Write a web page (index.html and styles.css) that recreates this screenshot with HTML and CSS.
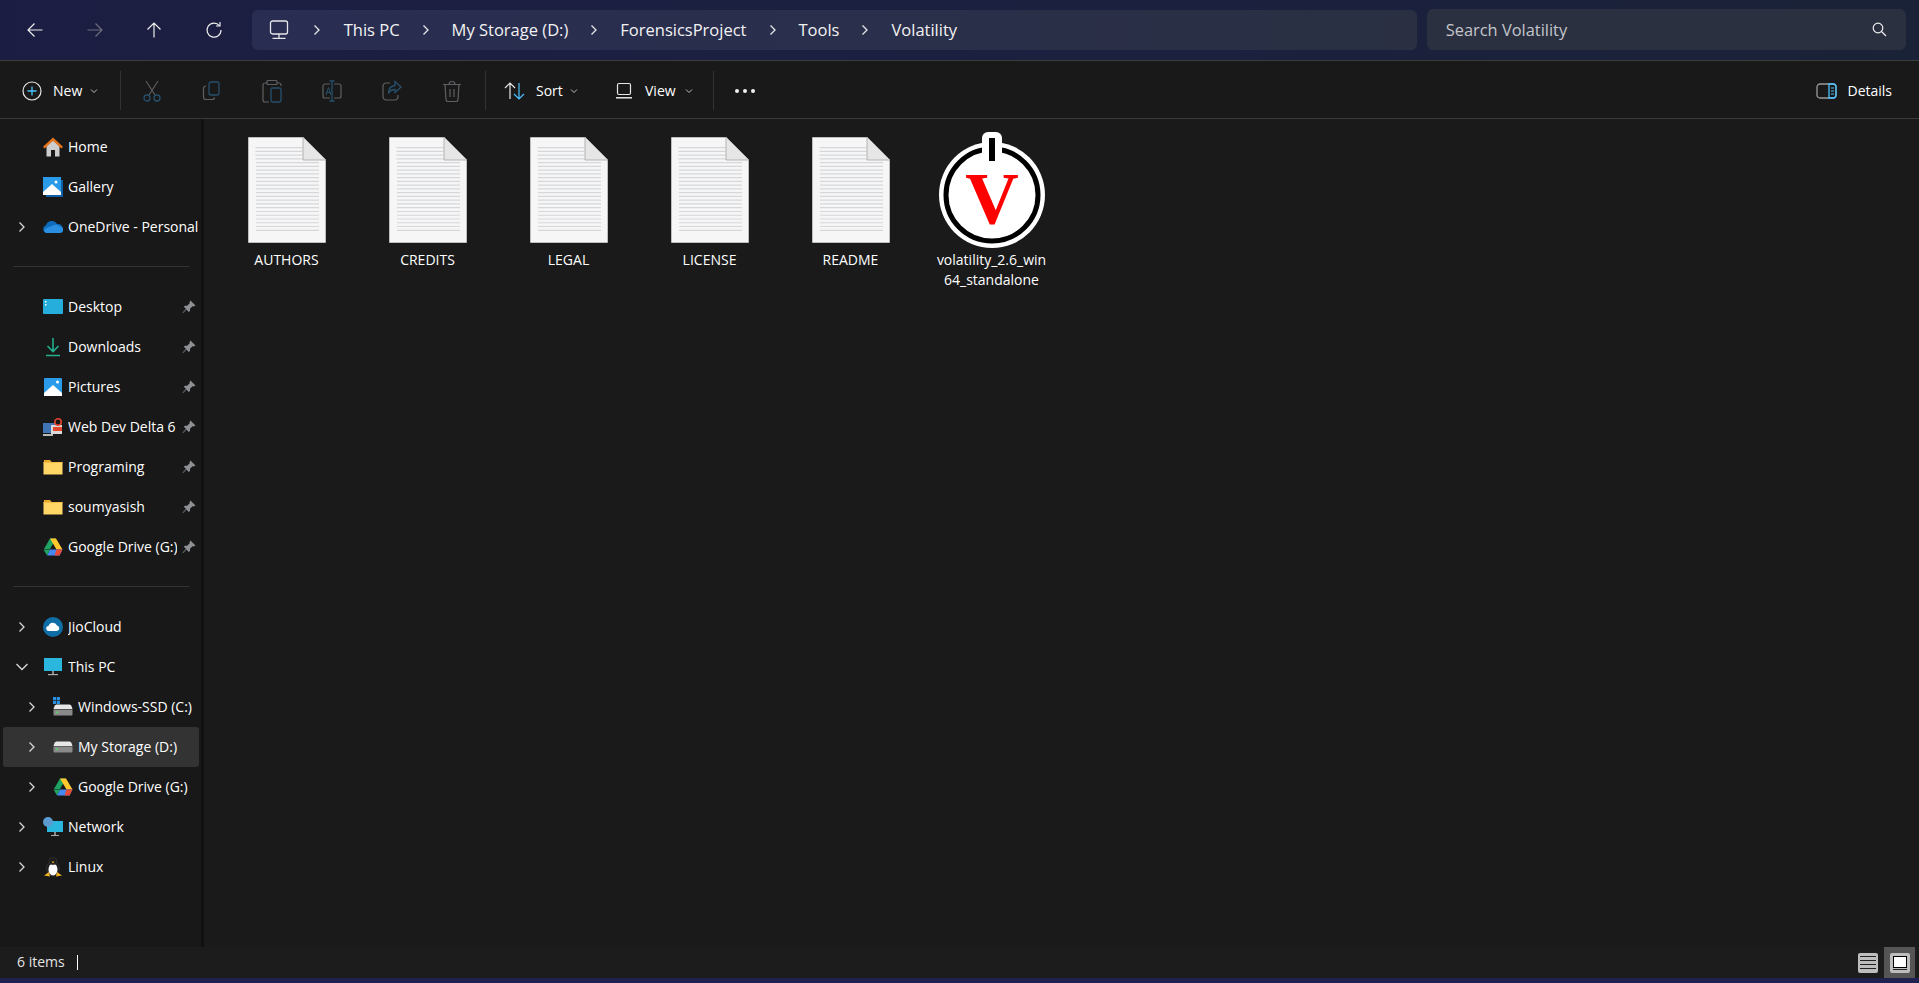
FILE: index.html
```html
<!DOCTYPE html>
<html lang="en">
<head>
    <meta charset="UTF-8">
    <title>Volatility - File Explorer</title>
    <link rel="stylesheet" href="styles.css">
</head>
<body>
    <!-- shared icons -->
    <svg class="sprite" xmlns="http://www.w3.org/2000/svg">
        <symbol id="chev-right" viewBox="0 0 12 12"><path d="M3.5 1.5 8 6l-4.500 4.500" fill="none" stroke="currentColor" stroke-width="1.300"/></symbol>
        <symbol id="caret" viewBox="0 0 8 8"><path d="M1 2.500 4 5.500 7 2.500" fill="none" stroke="currentColor" stroke-width="1"/></symbol>
        <symbol id="pin" viewBox="0 0 14 14"><path d="M8.500 0.500 13.500 5.500 12 6.500 10.500 6.300 8 8.800 8 11 6.800 12 4.500 9.500 1 13 0.500 12.500 4 9 1.800 6.800 3 5.800 5.200 5.800 7.700 3.300 7.500 2Z" fill="#8d9094"/></symbol>
        <symbol id="folder" viewBox="0 0 20 16"><path d="M1 1h6l2 2.500H1Z" fill="#e8a92c"/><path d="M.5 3h19v12.500H.5Z" fill="#ffd766"/><path d="M.5 3h19v1H.5Z" fill="#f3bd47"/></symbol>
        <symbol id="gdrive" viewBox="0 0 20 18"><path d="M7 .5h6l-6 10.500H1Z" fill="#1ea362"/><path d="M7 .5h6l6.500 11h-6Z" fill="#ffc92e"/><path d="M4 17.500 7 11.500h12.500l-3 6Z" fill="#4688f4"/><path d="M.500 11.500h6.500l-3 6Z" fill="#1ea362"/><path d="M16.500 17.500h-5l2-6h6Z" fill="#e84a35"/></symbol>
        <symbol id="drive" viewBox="0 0 20 12"><path d="M4 .5h12c1 0 2 .5 2.500 1.500l1 3H.500l1-3C2 1 3 .5 4 .5Z" fill="#e6e6e6"/><path d="M.5 5.500h19v5c0 .5-.5 1-1 1h-17c-.5 0-1-.5-1-1Z" fill="#8a8a8a"/><rect x="3" y="7.500" width="2" height="1.500" fill="#47e05f"/></symbol>
        <symbol id="doc" viewBox="0 0 78 106"><path d="M0 0h55l23 23v83H0Z" fill="#f6f6f7" stroke="#6b6b6b" stroke-width=".8"/><line x1="31" y1="10" x2="31" y2="24" stroke="#d6d7d9" stroke-width="47" stroke-dasharray="1.200 2.560"/><line x1="39.500" y1="25" x2="39.500" y2="96" stroke="#d6d7d9" stroke-width="63" stroke-dasharray="1.200 2.560"/><path d="M55 0 78 23H55Z" fill="#e6e6e6" stroke="#a5a5a5" stroke-width=".8"/></symbol>
    </svg>

    <div class="app">
        <!-- Barra de titulo -->
        <header class="titlebar">
            <nav class="nav-btns">
                <span class="nav-btn"><svg width="18" height="18" viewBox="0 0 18 18"><path d="M16.500 9H2M8.500 2.500 2 9l6.500 6.500" fill="none" stroke="#eee" stroke-width="1.200"/></svg></span>
                <span class="nav-btn"><svg width="18" height="18" viewBox="0 0 18 18"><path d="M1.500 9H16M9.500 2.500 16 9l-6.500 6.500" fill="none" stroke="#6d6f7d" stroke-width="1.200"/></svg></span>
                <span class="nav-btn"><svg width="18" height="18" viewBox="0 0 18 18"><path d="M9 16.500V2M2.500 8.500 9 2l6.500 6.500" fill="none" stroke="#eee" stroke-width="1.200"/></svg></span>
                <span class="nav-btn"><svg width="18" height="18" viewBox="0 0 18 18"><path d="M14.500 4.800A7 7 0 1 0 16 9" fill="none" stroke="#eee" stroke-width="1.200"/><path d="M15 1v4h-4" fill="none" stroke="#eee" stroke-width="1.200"/></svg></span>
            </nav>
            <div class="address">
                <svg class="pc-icon" width="20" height="20" viewBox="0 0 20 20"><rect x="1.500" y="1" width="17" height="13" rx="2" fill="none" stroke="#e6e6ea" stroke-width="1.300"/><path d="M10 14v4M3.500 18.300h13" fill="none" stroke="#e6e6ea" stroke-width="1.300"/></svg>
                <svg class="crumb-chev" width="12" height="12"><use href="#chev-right"/></svg>
                <span>This PC</span>
                <svg class="crumb-chev" width="12" height="12"><use href="#chev-right"/></svg>
                <span>My Storage (D:)</span>
                <svg class="crumb-chev" width="12" height="12"><use href="#chev-right"/></svg>
                <span>ForensicsProject</span>
                <svg class="crumb-chev" width="12" height="12"><use href="#chev-right"/></svg>
                <span>Tools</span>
                <svg class="crumb-chev" width="12" height="12"><use href="#chev-right"/></svg>
                <span>Volatility</span>
            </div>
            <div class="search">
                <span>Search Volatility</span>
                <svg width="15" height="15" viewBox="0 0 15 15"><circle cx="6" cy="6" r="4.800" fill="none" stroke="#eee" stroke-width="1.200"/><path d="M9.500 9.500 14 14" stroke="#eee" stroke-width="1.200"/></svg>
            </div>
        </header>

        <!-- Barra de comandos -->
        <div class="toolbar">
            <div class="tool tool-new">
                <svg width="20" height="20" viewBox="0 0 20 20"><circle cx="10" cy="10" r="9" fill="none" stroke="#e8e8e8" stroke-width="1.200"/><path d="M10 5.500v9M5.500 10h9" stroke="#4cc2ff" stroke-width="1.300"/></svg>
                <span>New</span>
                <svg class="caret" width="8" height="8"><use href="#caret"/></svg>
            </div>
            <span class="divider"></span>
            <div class="tool-icons">
                <span class="icon-btn"><svg width="20" height="22" viewBox="0 0 20 22"><path d="M4 1l9 14M16 1 7 15" stroke="#5e6063" fill="none" stroke-width="1.100"/><circle cx="5" cy="18" r="3" fill="none" stroke="#27506c" stroke-width="1.300"/><circle cx="15" cy="18" r="3" fill="none" stroke="#27506c" stroke-width="1.300"/></svg></span>
                <span class="icon-btn"><svg width="20" height="20" viewBox="0 0 20 20"><rect x="7" y="1" width="10" height="13" rx="2" fill="none" stroke="#27506c" stroke-width="1.300"/><path d="M4 5C2.500 5 1.500 6 1.500 7.500V16c0 1.500 1 2.500 2.500 2.500h6c1.500 0 2.500-1 2.500-2" fill="none" stroke="#5e6063" stroke-width="1.200"/></svg></span>
                <span class="icon-btn"><svg width="20" height="24" viewBox="0 0 20 24"><path d="M5 4H3C2 4 1 5 1 6v15c0 1 1 2 2 2h4M15 4h2c1 0 2 1 2 2v1" fill="none" stroke="#5e6063" stroke-width="1.200"/><rect x="5" y="1.500" width="10" height="4" rx="1" fill="none" stroke="#5e6063" stroke-width="1.200"/><rect x="9" y="9" width="10" height="14" rx="1.500" fill="none" stroke="#27506c" stroke-width="1.300"/></svg></span>
                <span class="icon-btn"><svg width="20" height="22" viewBox="0 0 20 22"><path d="M8 4H3C2 4 1 5 1 6v10c0 1 1 2 2 2h5M12 4h5c1 0 2 1 2 2v10c0 1-1 2-2 2h-5" fill="none" stroke="#5e6063" stroke-width="1.200"/><path d="M10 1v20M7.500 1h5M7.500 21h5" stroke="#27506c" stroke-width="1.300" fill="none"/><path d="M4 15 6.500 7.500 9 15M5 12.500h3" stroke="#27506c" fill="none"/></svg></span>
                <span class="icon-btn"><svg width="20" height="22" viewBox="0 0 20 22"><path d="M8 3H4C2.500 3 1 4.500 1 6v11c0 1.500 1.500 3 3 3h9c1.500 0 3-1.500 3-3v-2" fill="none" stroke="#5e6063" stroke-width="1.200"/><path d="M13 1.500 19 7l-6 5.500V9.500c-3 0-5 1-6.500 4 0-5 2.500-7.500 6.500-8Z" fill="none" stroke="#27506c" stroke-width="1.300"/></svg></span>
                <span class="icon-btn"><svg width="20" height="22" viewBox="0 0 20 22"><path d="M1 4.500h18M7 4.500c0-2 1-3 3-3s3 1 3 3M3 4.500l1 15c0 1 1 2 2 2h8c1 0 2-1 2-2l1-15M8 9v8M12 9v8" fill="none" stroke="#5e6063" stroke-width="1.200"/></svg></span>
            </div>
            <span class="divider"></span>
            <div class="tool tool-sort">
                <svg width="22" height="20" viewBox="0 0 22 20"><path d="M6 18V2M1 7l5-5 5 5" fill="none" stroke="#e8e8e8" stroke-width="1.200"/><path d="M15 2v16M10 13l5 5 5-5" fill="none" stroke="#4cc2ff" stroke-width="1.200"/></svg>
                <span>Sort</span>
                <svg class="caret" width="8" height="8"><use href="#caret"/></svg>
            </div>
            <div class="tool tool-view">
                <svg width="18" height="18" viewBox="0 0 18 18"><rect x="2.500" y="1.500" width="13" height="11" rx="1.500" fill="none" stroke="#e8e8e8" stroke-width="1.200"/><path d="M1 15.800h16" stroke="#e8e8e8" stroke-width="1.500"/></svg>
                <span>View</span>
                <svg class="caret" width="8" height="8"><use href="#caret"/></svg>
            </div>
            <span class="divider"></span>
            <div class="more"><i></i><i></i><i></i></div>
            <div class="details">
                <svg width="21" height="16" viewBox="0 0 21 16"><rect x="1" y="1" width="19" height="14" rx="3" fill="none" stroke="#9a9a9a" stroke-width="1.300"/><path d="M13 1h4c2 0 3 1 3 3v8c0 2-1 3-3 3h-4Z" fill="none" stroke="#4cc2ff" stroke-width="1.300"/><path d="M15 5h3M15 8h3M15 11h3" stroke="#4cc2ff"/></svg>
                <span>Details</span>
            </div>
        </div>

        <div class="main">
            <!-- Painel lateral -->
            <aside class="sidebar">
                <div class="row">
                    <span class="chev"></span>
                    <svg class="ico" viewBox="0 0 20 20"><path d="M3.500 9 10 3.500 16.500 9v10.500H12V13H8v6.500H3.500Z" fill="#cdcdcd"/><path d="M10 .5 0 9.800l1.600 1.700L10 3.800l8.400 7.700 1.600-1.700Z" fill="#e8741a"/></svg>
                    <span class="label">Home</span>
                </div>
                <div class="row">
                    <span class="chev"></span>
                    <svg class="ico" viewBox="0 0 20 20"><path d="M3 20h17V3h-2v15H3Z" fill="#0f5ea8"/><rect width="18" height="18" fill="#2a9be8"/><path d="M0 15 9 7l9 8v3H0Z" fill="#fff"/><circle cx="13" cy="5" r="1.500" fill="#fff"/></svg>
                    <span class="label">Gallery</span>
                </div>
                <div class="row">
                    <svg class="chev" width="12" height="12"><use href="#chev-right"/></svg>
                    <svg class="ico" viewBox="0 0 20 20"><path d="M4 16a4 4 0 0 1-1-7.800A6 6 0 0 1 14 7a4.500 4.500 0 0 1 2 9Z" fill="#0f6cbd"/><path d="M3 16h14a3 3 0 0 0 0-6.500 6 6 0 0 0-8-.500C6 10 2 11 1 14Z" fill="#2a8fe0"/></svg>
                    <span class="label">OneDrive - Personal</span>
                </div>
                <hr class="side-sep">
                <div class="row">
                    <span class="chev"></span>
                    <svg class="ico" viewBox="0 0 20 20"><rect y="2" width="20" height="15" rx="1" fill="#25aedb"/><rect x="2" y="4" width="1.500" height="1.500" fill="#fff"/><rect x="2" y="7" width="1.500" height="1.500" fill="#fff"/></svg>
                    <span class="label">Desktop</span>
                    <svg class="pin" width="14" height="14"><use href="#pin"/></svg>
                </div>
                <div class="row">
                    <span class="chev"></span>
                    <svg class="ico" viewBox="0 0 20 20"><path d="M10 1v13M4.500 9l5.500 5.500L15.500 9M3 18.500h14" fill="none" stroke="#22b08e" stroke-width="1.600"/></svg>
                    <span class="label">Downloads</span>
                    <svg class="pin" width="14" height="14"><use href="#pin"/></svg>
                </div>
                <div class="row">
                    <span class="chev"></span>
                    <svg class="ico" viewBox="0 0 20 20"><rect x="1" y="1" width="18" height="18" rx="1" fill="#2a9be8"/><path d="M1 16 10 8l9 8v3H1Z" fill="#fff"/><circle cx="14.500" cy="5" r="1.500" fill="#fff"/></svg>
                    <span class="label">Pictures</span>
                    <svg class="pin" width="14" height="14"><use href="#pin"/></svg>
                </div>
                <div class="row">
                    <span class="chev"></span>
                    <svg class="ico" viewBox="0 0 20 20"><rect y="6" width="12" height="10" fill="#3f74b5"/><rect x="8" y="8" width="11" height="9" fill="#d9d9d9"/><rect x="10" y="10" width="9" height="4" fill="#e2452c"/><circle cx="15" cy="5" r="3.200" fill="none" stroke="#e2452c" stroke-width="1.600"/><rect y="17" width="10" height="2" fill="#bbb"/></svg>
                    <span class="label">Web Dev Delta 6</span>
                    <svg class="pin" width="14" height="14"><use href="#pin"/></svg>
                </div>
                <div class="row">
                    <span class="chev"></span>
                    <svg class="ico" viewBox="0 0 20 20"><use href="#folder" y="2" width="20" height="16"/></svg>
                    <span class="label">Programing</span>
                    <svg class="pin" width="14" height="14"><use href="#pin"/></svg>
                </div>
                <div class="row">
                    <span class="chev"></span>
                    <svg class="ico" viewBox="0 0 20 20"><use href="#folder" y="2" width="20" height="16"/></svg>
                    <span class="label">soumyasish</span>
                    <svg class="pin" width="14" height="14"><use href="#pin"/></svg>
                </div>
                <div class="row">
                    <span class="chev"></span>
                    <svg class="ico" viewBox="0 0 20 20"><use href="#gdrive" y="1" width="20" height="18"/></svg>
                    <span class="label">Google Drive (G:)</span>
                    <svg class="pin" width="14" height="14"><use href="#pin"/></svg>
                </div>
                <hr class="side-sep">
                <div class="row">
                    <svg class="chev" width="12" height="12"><use href="#chev-right"/></svg>
                    <svg class="ico" viewBox="0 0 20 20"><circle cx="10" cy="10" r="10" fill="#0f6ea6"/><path d="M6 14a2.500 2.500 0 0 1-.5-5A4.500 4.500 0 0 1 14 8.500a2.800 2.800 0 0 1 0 5.500Z" fill="#fff"/></svg>
                    <span class="label">JioCloud</span>
                </div>
                <div class="row">
                    <svg class="chev" width="12" height="12" viewBox="0 0 12 12"><path d="M.5 3 6 8.500 11.500 3" fill="none" stroke="currentColor" stroke-width="1.300"/></svg>
                    <svg class="ico" viewBox="0 0 20 20"><rect x="1" y="1" width="18" height="13" fill="#2bb7dd"/><rect x="9" y="14" width="2" height="3" fill="#888"/><rect x="5" y="17" width="10" height="1.200" fill="#aaa"/></svg>
                    <span class="label">This PC</span>
                </div>
                <div class="row row-sub">
                    <svg class="chev" width="12" height="12"><use href="#chev-right"/></svg>
                    <svg class="ico" viewBox="0 0 20 20"><rect x="0" y="0" width="3.200" height="3.200" fill="#2a8fe0"/><rect x="3.800" y="0" width="3.200" height="3.200" fill="#2a8fe0"/><rect x="0" y="3.800" width="3.200" height="3.200" fill="#2a8fe0"/><rect x="3.800" y="3.800" width="3.200" height="3.200" fill="#2a8fe0"/><use href="#drive" y="7" width="20" height="12"/></svg>
                    <span class="label">Windows-SSD (C:)</span>
                </div>
                <div class="row row-sub row-active">
                    <svg class="chev" width="12" height="12"><use href="#chev-right"/></svg>
                    <svg class="ico" viewBox="0 0 20 20"><use href="#drive" y="4" width="20" height="12"/></svg>
                    <span class="label">My Storage (D:)</span>
                </div>
                <div class="row row-sub">
                    <svg class="chev" width="12" height="12"><use href="#chev-right"/></svg>
                    <svg class="ico" viewBox="0 0 20 20"><use href="#gdrive" y="1" width="20" height="18"/></svg>
                    <span class="label">Google Drive (G:)</span>
                </div>
                <div class="row">
                    <svg class="chev" width="12" height="12"><use href="#chev-right"/></svg>
                    <svg class="ico" viewBox="0 0 20 20"><rect x="4" y="4" width="16" height="11" fill="#2bb7dd"/><rect x="11" y="15" width="2" height="3" fill="#888"/><rect x="8" y="18" width="8" height="1" fill="#aaa"/><circle cx="5" cy="5" r="5" fill="#5b9bd0"/></svg>
                    <span class="label">Network</span>
                </div>
                <div class="row">
                    <svg class="chev" width="12" height="12"><use href="#chev-right"/></svg>
                    <svg class="ico" viewBox="0 0 20 20"><ellipse cx="10" cy="11.500" rx="6.500" ry="7.500" fill="#1c1c1c" stroke="#444" stroke-width=".5"/><ellipse cx="10" cy="12.500" rx="4.500" ry="6" fill="#fff"/><circle cx="10" cy="4" r="3.800" fill="#1c1c1c" stroke="#444" stroke-width=".5"/><path d="M8.500 4.500h3L10 6.500Z" fill="#f0b323"/><path d="M1 18.500 6 15l1 4.500Zm18 0L14 15l-1 4.500Z" fill="#f0b323"/></svg>
                    <span class="label">Linux</span>
                </div>
            </aside>

            <!-- Arquivos -->
            <section class="files">
                <div class="file"><svg class="doc" width="78" height="106"><use href="#doc"/></svg><span class="file-name">AUTHORS</span></div>
                <div class="file"><svg class="doc" width="78" height="106"><use href="#doc"/></svg><span class="file-name">CREDITS</span></div>
                <div class="file"><svg class="doc" width="78" height="106"><use href="#doc"/></svg><span class="file-name">LEGAL</span></div>
                <div class="file"><svg class="doc" width="78" height="106"><use href="#doc"/></svg><span class="file-name">LICENSE</span></div>
                <div class="file"><svg class="doc" width="78" height="106"><use href="#doc"/></svg><span class="file-name">README</span></div>
                <div class="file">
                    <svg class="vol-icon" width="108" height="120" viewBox="0 0 108 120">
                        <circle cx="54" cy="64" r="53" fill="#fff"/>
                        <circle cx="54" cy="64" r="46" fill="#fff" stroke="#000" stroke-width="5"/>
                        <rect x="44" y="1" width="20" height="34" rx="6" fill="#fff"/>
                        <rect x="51" y="7" width="6" height="23" fill="#000"/>
                        <text class="vol-v" x="54" y="93" text-anchor="middle">V</text>
                    </svg>
                    <span class="file-name">volatility_2.6_win<br>64_standalone</span>
                </div>
            </section>
        </div>

        <!-- Barra de status -->
        <footer class="statusbar">
            <span class="status-text">6 items</span>
            <span class="status-caret"></span>
            <div class="view-toggle">
                <span class="vt vt-list"><i></i><i></i><i></i><i></i></span>
                <span class="vt-frame"><span class="vt vt-icons"><b></b><i></i></span></span>
            </div>
        </footer>
        <div class="bottom-strip"></div>
    </div>
</body>
</html>
```

FILE: styles.css
```css
* {
    box-sizing: border-box;
}
body {
    margin: 0;
    background-color: #191919;
    color: #fff;
    font-family: "Open Sans", "Noto Sans", sans-serif;
    font-size: 14px;
}
.sprite {
    display: none;
}
.app {
    display: flex;
    flex-direction: column;
    height: 100vh;
    overflow: hidden;
}

/* titlebar */
.titlebar {
    display: flex;
    align-items: center;
    height: 61px;
    flex-shrink: 0;
    padding-left: 5px;
    padding-bottom: 1px;
    background: linear-gradient(90deg, #1c1d42 0%, #1b2040 50%, #1a2237 100%);
    border-bottom: 1px solid #3c3c3c;
}
.nav-btns {
    display: flex;
}
.nav-btn {
    display: flex;
    align-items: center;
    justify-content: center;
    width: 59.700px;
    height: 40px;
}
.address {
    display: flex;
    align-items: center;
    width: 1165px;
    height: 40px;
    margin-left: 8px;
    padding-left: 17px;
    background: linear-gradient(90deg, #292d52 0%, #2a2f4c 50%, #2a3042 100%);
    border-radius: 6px;
    font-size: 16.500px;
    color: #f2f2f2;
}
.pc-icon {
    margin-right: 22px;
}
.crumb-chev {
    color: #e8e8e8;
    margin: 0 20px;
}
.pc-icon + .crumb-chev {
    margin-left: 0;
    margin-right: 21px;
}
.search {
    display: flex;
    align-items: center;
    justify-content: space-between;
    width: 479px;
    height: 41px;
    margin-left: 10px;
    padding: 0 19px 0 19px;
    background-color: #2a3040;
    border-radius: 6px;
    font-size: 16.400px;
    color: #c4c6cc;
}

/* toolbar */
.toolbar {
    display: flex;
    align-items: center;
    height: 58px;
    flex-shrink: 0;
    border-bottom: 1px solid #3a3a3a;
    padding-top: 2px;
}
.tool {
    display: flex;
    align-items: center;
    flex-shrink: 0;
}
.tool-new {
    width: 120px;
    padding-left: 22px;
    gap: 11px;
}
.caret {
    color: #bdbdbd;
    margin-left: -3px;
}
.divider {
    width: 1px;
    height: 39px;
    background-color: #333;
    flex-shrink: 0;
}
.tool-icons {
    display: flex;
    padding-left: 1px;
    width: 364px;
}
.icon-btn {
    display: flex;
    align-items: center;
    justify-content: center;
    width: 60px;
    height: 40px;
}
.tool-sort {
    width: 114px;
    padding-left: 18px;
    gap: 10px;
}
.tool-view {
    width: 113px;
    padding-left: 15px;
    gap: 12px;
}
.more {
    display: flex;
    gap: 4px;
    padding-left: 21px;
}
.more i {
    width: 4px;
    height: 4px;
    border-radius: 50%;
    background-color: #f0f0f0;
}
.details {
    display: flex;
    align-items: center;
    gap: 10px;
    margin-left: auto;
    padding-right: 27px;
}

/* sidebar */
.main {
    display: flex;
    flex: 1;
    min-height: 0;
}
.sidebar {
    width: 204px;
    flex-shrink: 0;
    padding: 8px 2px 0 3px;
    border-right: 3px solid #111;
    background-color: #181818;
}
.row {
    display: flex;
    align-items: center;
    height: 40px;
    padding-left: 13px;
    overflow: hidden;
}
.row-sub {
    padding-left: 23px;
}
.row-active {
    background-color: #333;
    border-radius: 3px;
}
.chev {
    width: 12px;
    height: 12px;
    flex-shrink: 0;
    color: #d8d8d8;
}
.ico {
    width: 20px;
    height: 20px;
    margin: 0 5px 0 15px;
    flex-shrink: 0;
}
.label {
    flex: 1;
    min-width: 0;
    padding-bottom: 2px;
    white-space: nowrap;
    overflow: hidden;
}
.pin {
    flex-shrink: 0;
    margin: 0 3px 0 5px;
}
.side-sep {
    height: 1px;
    margin: 19px 10px 20px 10px;
    border: 0;
    background-color: #333;
}

/* content */
.files {
    display: flex;
    align-items: flex-start;
    flex: 1;
    padding: 18px 0 0 12px;
    background-color: #1a1a1a;
}
.file {
    display: flex;
    flex-direction: column;
    align-items: center;
    width: 141px;
    flex-shrink: 0;
}
.doc {
    display: block;
}
.file-name {
    margin-top: 7px;
    line-height: 20px;
    text-align: center;
}
.vol-icon {
    display: block;
    margin-top: -6px;
    margin-bottom: -8px;
}
.vol-v {
    font-family: "Liberation Serif", serif;
    font-weight: 700;
    font-size: 74px;
    fill: #ff0000;
}

/* statusbar */
.statusbar {
    display: flex;
    align-items: center;
    height: 31px;
    flex-shrink: 0;
    padding-left: 17px;
    background-color: #1c1c1c;
    color: #e4e4e4;
}
.status-text {
    padding-bottom: 2px;
}
.status-caret {
    width: 1px;
    height: 15px;
    margin-left: 12px;
    background-color: #fff;
}
.view-toggle {
    display: flex;
    align-items: center;
    margin-left: auto;
    padding-right: 4px;
    gap: 6px;
}
.vt {
    display: flex;
    flex-direction: column;
    width: 20px;
    height: 20px;
    background-color: #bdbdbd;
    border-radius: 2px;
}
.vt-list {
    justify-content: center;
    gap: 3px;
    padding: 0 2px;
}
.vt-list i {
    height: 1px;
    background-color: #222;
}
.vt-frame {
    display: flex;
    align-items: center;
    justify-content: center;
    width: 31px;
    height: 31px;
    background-color: #555;
}
.vt-icons {
    align-items: center;
    justify-content: center;
    gap: 1px;
}
.vt-icons b {
    width: 14px;
    height: 12px;
    background-color: #fff;
    border: 1px solid #000;
}
.vt-icons i {
    width: 14px;
    height: 1px;
    background-color: #222;
}
.bottom-strip {
    height: 5px;
    flex-shrink: 0;
    background-color: #1f2150;
}
```
